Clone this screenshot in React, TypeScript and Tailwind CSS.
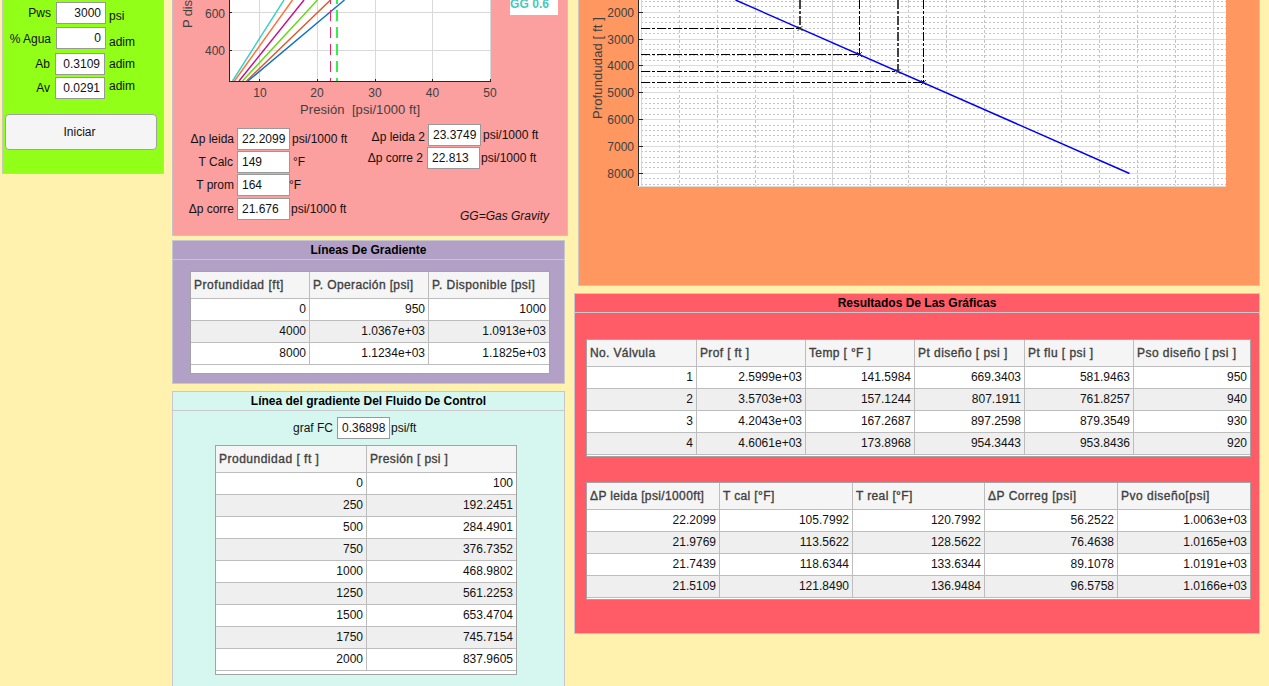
import React from "react";

type FieldProps = {
  label: string;
  value: string;
  unit: string;
  row: string;
  labelBox: string;
  inputBox: string;
  unitBox: string;
};

function Field({ label, value, unit, row, labelBox, inputBox, unitBox }: FieldProps) {
  return (
    <div className={`flex h-[22px] items-start whitespace-pre ${row}`}>
      <span className={`shrink-0 text-right leading-[14px] ${labelBox}`}>{label}</span>
      <span className={`flex h-[22px] shrink-0 items-center border border-[#999] bg-white leading-[14px] ${inputBox}`}>
        {value}
      </span>
      <span className={`leading-[14px] ${unitBox}`}>{unit}</span>
    </div>
  );
}

type TableProps = {
  columns: { title: string; width: string; tracking?: string }[];
  rows: string[][];
  box: string;
};

function DataTable({ columns, rows, box }: TableProps) {
  return (
    <div className={`flex flex-col overflow-hidden border border-[#a3a3a3] bg-white ${box}`}>
      <div className="flex h-[27px] shrink-0 border-b border-[#bdbdbd] bg-[#f5f5f5] text-[#404040]">
        {columns.map((c, i) => (
          <div
            key={c.title}
            className={`shrink-0 whitespace-pre pl-[3px] pt-[6px] font-normal leading-[14px] [-webkit-text-stroke:0.35px_#404040] ${
              c.tracking ?? "tracking-[0.37px]"
            } ${c.width} ${i < columns.length - 1 ? "border-r border-[#bdbdbd]" : ""}`}
          >
            {c.title}
          </div>
        ))}
      </div>
      {rows.map((r, n) => (
        <div key={n} className={`flex h-[22px] shrink-0 border-b border-[#bdbdbd] ${n % 2 ? "bg-[#efefef]" : "bg-white"}`}>
          {r.map((v, i) => (
            <div
              key={i}
              className={`shrink-0 pr-[3px] pt-[3px] text-right leading-[14px] ${columns[i].width} ${
                i < r.length - 1 ? "border-r border-[#bdbdbd]" : ""
              }`}
            >
              {v}
            </div>
          ))}
        </div>
      ))}
    </div>
  );
}

function PanelTitle({ children }: { children: React.ReactNode }) {
  return (
    <h2 className="flex h-[19px] items-center justify-center border-b border-[#c8c8cc] text-[12px] font-bold leading-[14px] text-black">
      {children}
    </h2>
  );
}

const gradientLines = [
  { c: "#3fd0c4", x1: 232.5, x2: 284 },
  { c: "#ff7038", x1: 234.5, x2: 292.5 },
  { c: "#c0108c", x1: 239, x2: 304 },
  { c: "#66d91a", x1: 242.5, x2: 317.5 },
  { c: "#d95a2b", x1: 246.5, x2: 330.5 },
  { c: "#1273c4", x1: 248, x2: 344.5 },
];

function GradientChart() {
  return (
    <svg className="block h-[120px] w-[394px] shrink-0" viewBox="173 0 394 120" fontSize="12" fill="#404040">
      <rect x="230" y="0" width="261" height="81" fill="#fff" />
      <g stroke="#d9d9d9" shapeRendering="crispEdges">
        <path d="M230 12.5H491M230 50.5H491M259.5 0V81M317.5 0V81M375.5 0V81M432.5 0V81M490.5 0V81" />
      </g>
      {gradientLines.map((l) => (
        <line key={l.c} x1={l.x1} y1="81" x2={l.x2} y2="0" stroke={l.c} strokeWidth="1.45" />
      ))}
      <path d="M330.5 0V81" stroke="#f5245f" strokeDasharray="11 6" strokeDashoffset="7" />
      <path d="M337 0V81" stroke="#33f04a" strokeWidth="2" strokeDasharray="11 6" strokeDashoffset="7" />
      <g stroke="#262626" shapeRendering="crispEdges">
        <path d="M229.5 0V82M229 81.5H491M229 12.5H232M229 50.5H232M259.5 79V82M317.5 79V82M375.5 79V82M432.5 79V82M490.5 79V82" />
      </g>
      <g textAnchor="end">
        <text x="225" y="18">600</text>
        <text x="225" y="55">400</text>
      </g>
      <g textAnchor="middle">
        <text x="260" y="97">10</text>
        <text x="317" y="97">20</text>
        <text x="375" y="97">30</text>
        <text x="432.500" y="97">40</text>
        <text x="490" y="97">50</text>
      </g>
      <text x="300" y="114" fontSize="13" textLength="120" style={{ whiteSpace: "pre" }}>{"Presión  [psi/1000 ft]"}</text>
      <text transform="translate(192 28) rotate(-90)" fontSize="13" textLength="28">P dis</text>
      <rect x="510" y="0" width="48" height="15" fill="#fff" />
      <text x="510" y="8" fontWeight="bold" fill="#45c9c0" textLength="39">GG 0.6</text>
    </svg>
  );
}

const majorY = [12.5, 39.5, 65.5, 92.5, 119.5, 146.5, 173.5];
const minorY = [
  1.5, 6.5, 17.5, 22.5, 28.5, 33.5, 44.5, 49.5, 55.5, 60.5, 71.5, 76.5, 82.5, 87.5, 98.5, 103.5, 108.5, 114.5, 125.5,
  130.5, 135.5, 141.5, 151.5, 157.5, 162.5, 167.5, 178.5, 184.5,
];
const majorX = [641.5, 832.5, 1023.5, 1213.5];
const minorX = [679.5, 717.5, 755.5, 793.5, 870.5, 908.5, 946.5, 984.5, 1061.5, 1099.5, 1137.5, 1175.5];
const valves = [
  { x: 800, y: 28.5, w: 2, c: "#444" },
  { x: 859.5, y: 54.5, w: 1, c: "#000" },
  { x: 898, y: 71.5, w: 2, c: "#444" },
  { x: 923.5, y: 82.5, w: 1, c: "#000" },
];

function DepthChart() {
  return (
    <svg className="block h-[190px] w-[680px] shrink-0" viewBox="579 0 680 190" fontSize="12" fill="#404040">
      <rect x="638" y="0" width="588" height="187" fill="#fff" />
      <g shapeRendering="crispEdges">
        {minorY.map((y) => (
          <line key={y} x1="641" x2="1226" y1={y} y2={y} stroke="#c4c4c4" strokeDasharray="2 2" />
        ))}
        {minorX.map((x) => (
          <line key={x} x1={x} x2={x} y1="0" y2="186" stroke="#c4c4c4" strokeDasharray="3 2" />
        ))}
        {majorY.map((y) => (
          <line key={y} x1="638" x2="1226" y1={y} y2={y} stroke="#dcdcdc" />
        ))}
        {majorX.map((x) => (
          <line key={x} x1={x} x2={x} y1="0" y2="186" stroke="#d4d4d4" />
        ))}
        <path d="M638 186.500H1226" stroke="#e3d8d2" />
      </g>
      <path d="M735.5 0L1129.500 173.500" stroke="#0000f5" strokeWidth="1.45" fill="none" />
      {valves.map((v) => (
        <g key={v.x}>
          <path d={`M641 ${v.y}H${v.x}`} stroke="#000" strokeDasharray="9 2 3 2" shapeRendering="crispEdges" />
          <path d={`M${v.x} 0V${v.y}`} stroke={v.c} strokeWidth={v.w} strokeDasharray="9 2 3 2" shapeRendering="crispEdges" />
          <path d={`M${v.x - 2.5} ${v.y - 2.5}l5 5m0 -5l-5 5`} stroke="#111" strokeWidth="0.8" />
        </g>
      ))}
      <g stroke="#262626" shapeRendering="crispEdges">
        <path d="M638.500 0V186" />
        {majorY.map((y) => (
          <line key={y} x1="638" x2="643" y1={y} y2={y} />
        ))}
      </g>
      <g textAnchor="end">
        {majorY.map((y, i) => (
          <text key={y} x="634" y={y + 4.5}>{`${i + 2}000`}</text>
        ))}
      </g>
      <text transform="translate(602 119) rotate(-90)" fontSize="13" textLength="102">Profundudad [ ft ]</text>
    </svg>
  );
}

const gradientRows = [
  ["0", "950", "1000"],
  ["4000", "1.0367e+03", "1.0913e+03"],
  ["8000", "1.1234e+03", "1.1825e+03"],
];

const fluidRows = [
  ["0", "100"],
  ["250", "192.2451"],
  ["500", "284.4901"],
  ["750", "376.7352"],
  ["1000", "468.9802"],
  ["1250", "561.2253"],
  ["1500", "653.4704"],
  ["1750", "745.7154"],
  ["2000", "837.9605"],
];

const valveRows = [
  ["1", "2.5999e+03", "141.5984", "669.3403", "581.9463", "950"],
  ["2", "3.5703e+03", "157.1244", "807.1911", "761.8257", "940"],
  ["3", "4.2043e+03", "167.2687", "897.2598", "879.3549", "930"],
  ["4", "4.6061e+03", "173.8968", "954.3443", "953.8436", "920"],
];

const designRows = [
  ["22.2099", "105.7992", "120.7992", "56.2522", "1.0063e+03"],
  ["21.9769", "113.5622", "128.5622", "76.4638", "1.0165e+03"],
  ["21.7439", "118.6344", "133.6344", "89.1078", "1.0191e+03"],
  ["21.5109", "121.8490", "136.9484", "96.5758", "1.0166e+03"],
];

export default function App() {
  return (
    <div className="flex h-[686px] w-[1269px] items-start overflow-hidden bg-[#fff2af] pl-[2px] font-['Liberation_Sans',Arial,sans-serif] text-[12px] text-[#111]">
      <section className="mr-[8px] h-[174px] w-[162px] shrink-0 border border-t-0 border-[#c4ccbc] bg-[#91ff17]">
        <Field label="Pws" value="3000" unit="psi" row="mt-[2px]" labelBox="w-[48px] mt-[4px]" inputBox="ml-[5px] w-[50px] justify-end pr-[4px]" unitBox="ml-[3px] mt-[7px]" />
        <Field label="% Agua" value="0" unit="adim" row="mt-[3px]" labelBox="w-[48px] mt-[5px]" inputBox="ml-[5px] w-[50px] justify-end pr-[4px]" unitBox="ml-[3px] mt-[8px]" />
        <Field label="Ab" value="0.3109" unit="adim" row="mt-[4px]" labelBox="w-[47px] mt-[4px]" inputBox="ml-[5px] w-[50px] justify-end pr-[4px]" unitBox="ml-[4px] mt-[4px]" />
        <Field label="Av" value="0.0291" unit="adim" row="mt-[2px]" labelBox="w-[47px] mt-[4px]" inputBox="ml-[5px] w-[50px] justify-end pr-[4px]" unitBox="ml-[4px] mt-[2px]" />
        <button className="ml-[2px] mt-[15px] flex h-[36px] w-[152px] items-center justify-center rounded-[4px] border border-[#a0a0a0] bg-[#f5f5f5] pr-[3px]">
          Iniciar
        </button>
      </section>

      <div className="flex w-[396px] shrink-0 flex-col items-start">
        <section className="h-[236px] w-[396px] shrink-0 border border-t-0 border-[#c9c3c6] bg-[#fc9f9f]">
          <GradientChart />
          <div className="flex items-start">
            <div className="w-[190px] pt-[8px]">
              <Field label="Δp leida" value="22.2099" unit="psi/1000 ft" row="" labelBox="w-[61px] mt-[4px]" inputBox="ml-[3px] w-[53px] pl-[4px]" unitBox="ml-[2px] mt-[4px]" />
              <Field label="T Calc" value="149" unit="°F" row="mt-[1px]" labelBox="w-[60px] mt-[4px]" inputBox="ml-[4px] w-[53px] pl-[4px]" unitBox="ml-[3px] mt-[4px]" />
              <Field label="T prom" value="164" unit="°F" row="mt-[1px]" labelBox="w-[61px] mt-[4px]" inputBox="ml-[3px] w-[53px] pl-[4px]" unitBox="-ml-px mt-[4px]" />
              <Field label="Δp corre" value="21.676" unit="psi/1000 ft" row="mt-[2px]" labelBox="w-[61px] mt-[4px]" inputBox="ml-[3px] w-[53px] pl-[4px]" unitBox="ml-[1px] mt-[4px]" />
            </div>
            <div className="pt-[4px]">
              <Field label="Δp leida 2" value="23.3749" unit="psi/1000 ft" row="" labelBox="w-[62px] mt-[6px]" inputBox="ml-[3px] w-[53px] pl-[4px]" unitBox="ml-[2px] mt-[4px]" />
              <Field label="Δp corre 2" value="22.813" unit="psi/1000 ft" row="mt-[1px]" labelBox="w-[60px] mt-[4px]" inputBox="ml-[4px] w-[53px] pl-[4px]" unitBox="ml-[1px] mt-[4px]" />
              <p className="ml-[97px] mt-[40px] italic leading-[14px]">GG=Gas Gravity</p>
            </div>
          </div>
        </section>

        <section className="mt-[4px] h-[144px] w-[393px] shrink-0 border border-[#c8c8cc] bg-[#b3a0c7]">
          <PanelTitle>Líneas De Gradiente</PanelTitle>
          <DataTable
            box="ml-[17px] mt-[11px] h-[103px] w-[360px]"
            columns={[
              { title: "Profundidad [ft]", width: "w-[119px]", tracking: "tracking-[0.53px]" },
              { title: "P. Operación [psi]", width: "w-[119px]" },
              { title: "P. Disponible [psi]", width: "w-[120px]", tracking: "tracking-[0.46px]" },
            ]}
            rows={gradientRows}
          />
        </section>

        <section className="mt-[7px] h-[310px] w-[393px] shrink-0 border border-[#c8c8cc] bg-[#d6f7ef]">
          <PanelTitle>Línea del gradiente Del Fluido De Control</PanelTitle>
          <Field label="graf FC" value="0.36898" unit="psi/ft" row="mt-[6px]" labelBox="w-[160px] mt-[4px]" inputBox="ml-[4px] w-[53px] pl-[4px]" unitBox="ml-[1px] mt-[4px]" />
          <DataTable
            box="ml-[42px] mt-[6px] h-[230px] w-[302px]"
            columns={[
              { title: "Produndidad [ ft ]", width: "w-[151px]", tracking: "tracking-[0.5px]" },
              { title: "Presión [ psi ]", width: "w-[149px]" },
            ]}
            rows={fluidRows}
          />
        </section>
      </div>

      <div className="ml-[6px] flex w-[686px] shrink-0 flex-col items-end">
        <section className="h-[286px] w-[682px] shrink-0 border border-t-0 border-[#cbc4c0] bg-[#ff9760]">
          <DepthChart />
        </section>

        <section className="mt-[7px] h-[341px] w-[686px] shrink-0 border border-[#c8c8cc] bg-[#ff5c67]">
          <PanelTitle>Resultados De Las Gráficas</PanelTitle>
          <DataTable
            box="ml-[11px] mt-[26px] h-[118px] w-[665px]"
            columns={[
              { title: "No. Válvula", width: "w-[110px]" },
              { title: "Prof [ ft ]", width: "w-[109px]" },
              { title: "Temp [ °F ]", width: "w-[109px]" },
              { title: "Pt diseño [ psi ]", width: "w-[110px]", tracking: "tracking-[0.45px]" },
              { title: "Pt flu [ psi ]", width: "w-[109px]", tracking: "tracking-[0.45px]" },
              { title: "Pso diseño [ psi ]", width: "w-[116px]", tracking: "tracking-[0.45px]" },
            ]}
            rows={valveRows}
          />
          <DataTable
            box="ml-[11px] mt-[25px] h-[118px] w-[665px]"
            columns={[
              { title: "ΔP leida [psi/1000ft]", width: "w-[133px]" },
              { title: "T cal [°F]", width: "w-[133px]" },
              { title: "T real [°F]", width: "w-[132px]" },
              { title: "ΔP Correg [psi]", width: "w-[133px]", tracking: "tracking-[0.5px]" },
              { title: "Pvo diseño[psi]", width: "w-[132px]", tracking: "tracking-[0.5px]" },
            ]}
            rows={designRows}
          />
        </section>
      </div>
    </div>
  );
}
